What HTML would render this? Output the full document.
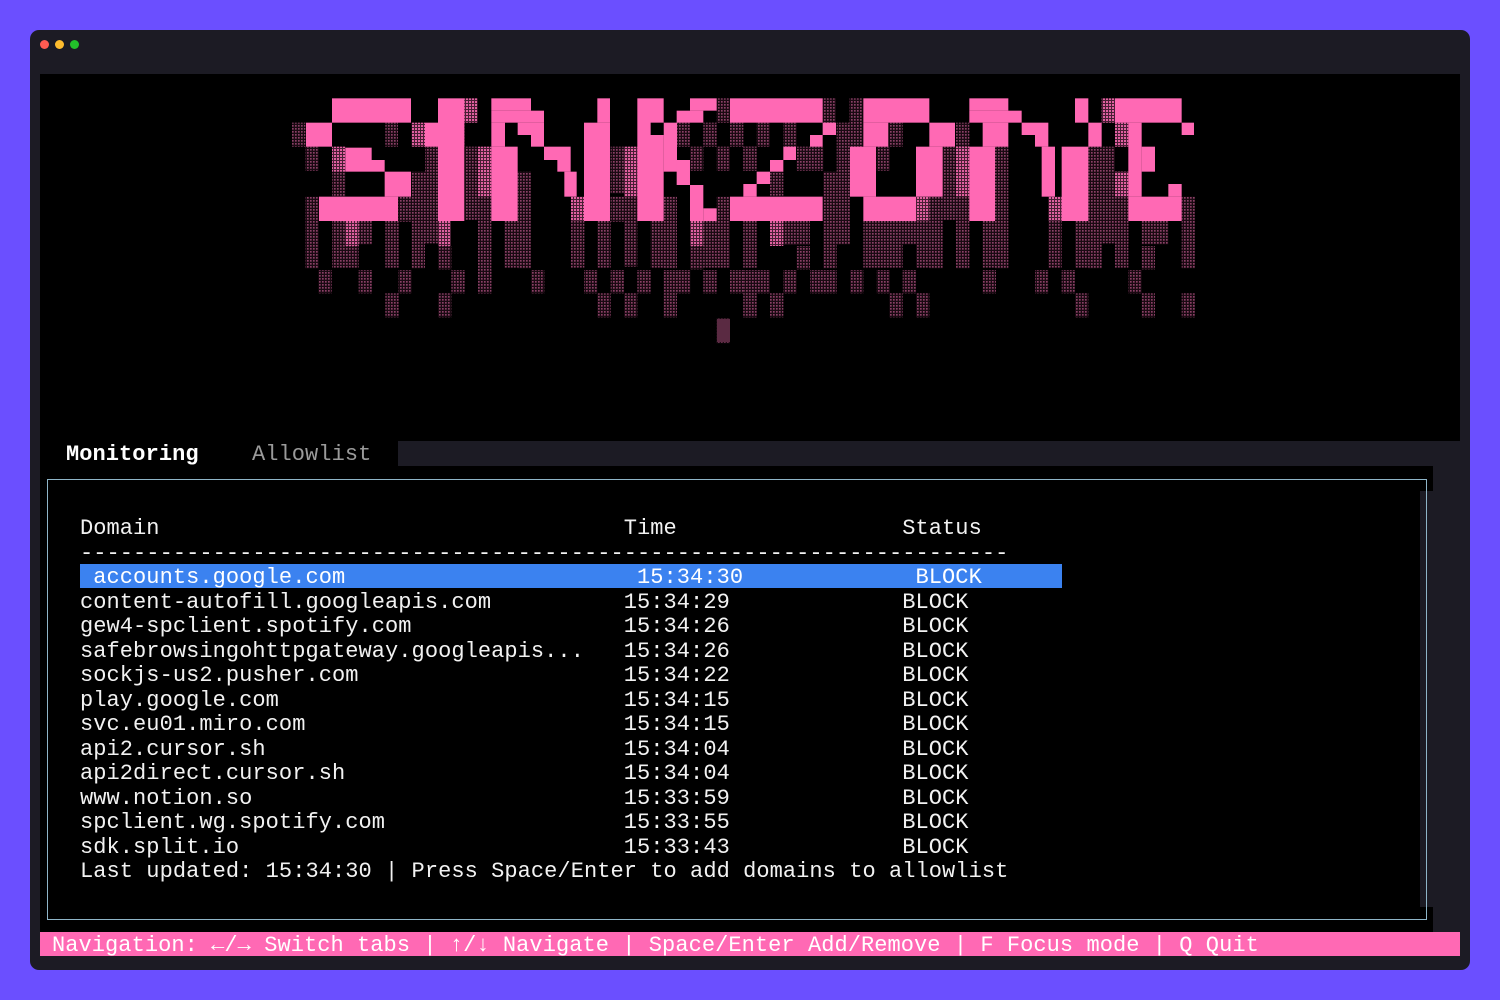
<!DOCTYPE html>
<html><head><meta charset="utf-8"><style>
*{margin:0;padding:0;box-sizing:border-box}
body{width:1500px;height:1000px;background:#6b4fff;position:relative;overflow:hidden;font-family:"Liberation Mono","DejaVu Sans Mono",monospace;}
.abs{position:absolute}
.win{left:30px;top:30px;width:1440px;height:940px;background:#1c1b24;border-radius:9px}
.dot{width:9px;height:9px;border-radius:50%;top:40px}
.t{position:absolute;white-space:pre;font-size:22px;line-height:24.5px;height:24.5px;color:#f2f2f2;letter-spacing:0.06px;padding-top:2px}
</style></head><body>
<div class="abs win"></div>
<div class="abs dot" style="left:40px;background:#ff5b52"></div>
<div class="abs dot" style="left:55px;background:#febc2e"></div>
<div class="abs dot" style="left:70px;background:#22c02a"></div>
<div class="abs" style="left:40px;top:74px;width:1420px;height:367px;background:#000"></div>
<div class="abs" style="left:40px;top:441px;width:358px;height:25px;background:#000"></div>
<div class="abs" style="left:40px;top:466px;width:1393px;height:466px;background:#000"></div>
<div class="abs" style="left:1420px;top:491px;width:13px;height:416px;background:#1c1b24"></div>
<div class="abs" style="left:47px;top:479px;width:1380px;height:441px;border:1px solid #8fb5c8"></div>
<svg class="abs" style="left:0;top:0" width="1500" height="440">
<defs>
<pattern id="pd" patternUnits="userSpaceOnUse" width="9" height="9"><rect width="9" height="9" fill="#1a0a12"/><rect width="5" height="5" fill="#8a4066"/></pattern>
<pattern id="pl" patternUnits="userSpaceOnUse" width="9" height="9"><rect width="9" height="9" fill="#4a1f35"/><rect width="6" height="6" fill="#e060a0"/></pattern>
</defs>
<g transform="translate(280,80) scale(0.33333)">
<g fill="url(#pd)">
<rect x="36" y="128" width="40" height="72"/><rect x="76" y="200" width="40" height="72"/><rect x="156" y="275" width="40" height="75"/><rect x="316" y="128" width="38" height="72"/><rect x="514" y="128" width="40" height="72"/><rect x="555" y="200" width="40" height="220"/><rect x="435" y="200" width="40" height="290"/><rect x="395" y="275" width="40" height="290"/><rect x="594" y="350" width="40" height="290"/><rect x="713" y="275" width="40" height="290"/><rect x="673" y="423" width="40" height="140"/><rect x="76" y="350" width="40" height="215"/><rect x="156" y="423" width="80" height="140"/><rect x="236" y="423" width="40" height="70"/><rect x="316" y="423" width="40" height="140"/><rect x="355" y="350" width="40" height="75"/><rect x="474" y="498" width="40" height="70"/><rect x="115" y="570" width="40" height="70"/><rect x="236" y="570" width="40" height="70"/><rect x="355" y="570" width="40" height="70"/><rect x="514" y="570" width="40" height="70"/><rect x="594" y="570" width="40" height="70"/><rect x="753" y="570" width="40" height="70"/><rect x="316" y="640" width="40" height="72"/><rect x="474" y="640" width="40" height="72"/>
<rect x="873" y="423" width="40" height="140"/><rect x="952" y="423" width="40" height="140"/><rect x="992" y="200" width="40" height="140"/><rect x="1032" y="350" width="40" height="210"/><rect x="992" y="350" width="40" height="75"/><rect x="912" y="570" width="40" height="70"/><rect x="992" y="570" width="40" height="70"/><rect x="1072" y="570" width="40" height="70"/><rect x="1151" y="350" width="40" height="215"/><rect x="1112" y="423" width="40" height="140"/><rect x="1151" y="570" width="80" height="70"/><rect x="1190" y="128" width="40" height="72"/><rect x="1230" y="200" width="40" height="72"/><rect x="1270" y="128" width="40" height="72"/><rect x="1310" y="55" width="40" height="73"/><rect x="1310" y="200" width="40" height="72"/><rect x="1350" y="128" width="40" height="72"/><rect x="1390" y="200" width="40" height="72"/><rect x="1230" y="498" width="40" height="70"/><rect x="1270" y="423" width="80" height="140"/><rect x="1310" y="350" width="40" height="75"/><rect x="1390" y="423" width="40" height="140"/><rect x="1270" y="570" width="40" height="70"/><rect x="1350" y="570" width="40" height="70"/><rect x="952" y="640" width="40" height="72"/><rect x="1032" y="640" width="40" height="72"/><rect x="1151" y="640" width="40" height="72"/><rect x="1390" y="640" width="40" height="72"/><rect x="1310" y="715" width="40" height="75"/>
</g>
<g fill="url(#pl)">
<rect x="156" y="200" width="40" height="75"/><rect x="395" y="128" width="40" height="72"/><rect x="594" y="200" width="40" height="150"/><rect x="553" y="55" width="40" height="73"/><rect x="1032" y="200" width="40" height="150"/><rect x="196" y="423" width="40" height="75"/><rect x="474" y="423" width="39" height="75"/><rect x="873" y="350" width="39" height="73"/><rect x="1230" y="423" width="40" height="75"/>
</g>
<g fill="#ff69b4">
<rect x="156" y="55" width="237" height="73"/><rect x="78" y="128" width="78" height="72"/><rect x="196" y="203" width="79" height="37"/><rect x="196" y="240" width="118" height="35"/><rect x="314" y="275" width="79" height="75"/><rect x="117" y="350" width="237" height="73"/>
<rect x="474" y="55" width="79" height="368"/><rect x="435" y="128" width="39" height="72"/>
<rect x="634" y="55" width="119" height="37"/><rect x="634" y="92" width="158" height="36"/><rect x="634" y="128" width="41" height="72"/><rect x="713" y="128" width="79" height="37"/><rect x="753" y="165" width="39" height="35"/><rect x="634" y="200" width="79" height="223"/><rect x="792" y="200" width="80" height="40"/><rect x="832" y="240" width="40" height="35"/><rect x="853" y="275" width="37" height="75"/><rect x="912" y="128" width="78" height="295"/><rect x="952" y="55" width="38" height="73"/>
<rect x="1072" y="55" width="79" height="368"/><rect x="1151" y="128" width="40" height="147"/><rect x="1190" y="240" width="40" height="75"/><rect x="1230" y="315" width="40" height="108"/><rect x="1270" y="385" width="40" height="38"/><rect x="1190" y="92" width="80" height="36"/><rect x="1230" y="55" width="80" height="37"/>
</g>
<rect x="1112" y="128" width="39" height="37" fill="#000"/>
</g>
<g transform="translate(740,80) scale(0.33333)">
<g fill="url(#pd)">
<rect x="248" y="55" width="40" height="73"/><rect x="328" y="55" width="40" height="145"/><rect x="50" y="128" width="40" height="72"/><rect x="130" y="128" width="40" height="72"/><rect x="10" y="200" width="40" height="72"/><rect x="170" y="200" width="80" height="72"/><rect x="250" y="275" width="40" height="290"/><rect x="290" y="128" width="40" height="365"/><rect x="90" y="275" width="40" height="72"/><rect x="10" y="423" width="40" height="140"/><rect x="130" y="423" width="80" height="72"/><rect x="170" y="498" width="40" height="70"/><rect x="410" y="200" width="40" height="72"/><rect x="448" y="128" width="40" height="72"/><rect x="608" y="200" width="40" height="220"/><rect x="648" y="128" width="40" height="72"/><rect x="568" y="350" width="40" height="215"/><rect x="370" y="423" width="80" height="140"/><rect x="448" y="423" width="40" height="140"/><rect x="488" y="423" width="40" height="70"/><rect x="528" y="423" width="40" height="140"/><rect x="648" y="350" width="40" height="215"/><rect x="728" y="423" width="40" height="140"/><rect x="765" y="200" width="40" height="365"/><rect x="925" y="423" width="40" height="140"/><rect x="1005" y="423" width="40" height="140"/><rect x="1045" y="200" width="80" height="150"/><rect x="1045" y="350" width="40" height="215"/><rect x="1085" y="350" width="80" height="140"/><rect x="1125" y="423" width="40" height="140"/><rect x="1205" y="423" width="80" height="70"/><rect x="1205" y="498" width="40" height="70"/><rect x="1325" y="350" width="40" height="215"/><rect x="10" y="570" width="80" height="70"/><rect x="130" y="570" width="40" height="70"/><rect x="210" y="570" width="80" height="70"/><rect x="330" y="570" width="40" height="70"/><rect x="410" y="570" width="40" height="70"/><rect x="488" y="570" width="40" height="70"/><rect x="728" y="570" width="40" height="70"/><rect x="885" y="570" width="40" height="70"/><rect x="965" y="570" width="40" height="70"/><rect x="1165" y="570" width="40" height="70"/><rect x="10" y="640" width="40" height="72"/><rect x="90" y="640" width="40" height="72"/><rect x="448" y="640" width="40" height="72"/><rect x="528" y="640" width="40" height="72"/><rect x="1005" y="640" width="40" height="72"/><rect x="1205" y="640" width="40" height="72"/><rect x="1325" y="640" width="40" height="72"/>
</g>
<g fill="url(#pl)">
<rect x="90" y="423" width="40" height="75"/><rect x="528" y="350" width="40" height="73"/><rect x="648" y="200" width="40" height="150"/><rect x="925" y="350" width="40" height="73"/><rect x="1085" y="55" width="40" height="73"/><rect x="1125" y="128" width="40" height="72"/><rect x="1125" y="275" width="40" height="75"/>
</g>
<g fill="#ff69b4">
<rect x="-30" y="55" width="278" height="73"/><rect x="248" y="128" width="40" height="37"/><rect x="210" y="165" width="38" height="35"/><rect x="130" y="200" width="38" height="40"/><rect x="90" y="240" width="40" height="35"/><rect x="50" y="275" width="40" height="37"/><rect x="10" y="312" width="40" height="38"/><rect x="-30" y="350" width="278" height="73"/>
<rect x="370" y="55" width="198" height="73"/><rect x="370" y="128" width="75" height="72"/><rect x="330" y="200" width="78" height="150"/><rect x="370" y="350" width="158" height="73"/><rect x="568" y="128" width="77" height="72"/><rect x="528" y="200" width="80" height="150"/>
<rect x="688" y="55" width="117" height="37"/><rect x="688" y="92" width="157" height="36"/><rect x="728" y="128" width="77" height="72"/><rect x="688" y="200" width="77" height="223"/><rect x="845" y="128" width="80" height="37"/><rect x="885" y="165" width="40" height="35"/><rect x="905" y="200" width="40" height="150"/><rect x="965" y="200" width="80" height="223"/><rect x="1045" y="128" width="40" height="72"/><rect x="1005" y="55" width="40" height="73"/>
<rect x="1125" y="55" width="200" height="73"/><rect x="1165" y="128" width="40" height="222"/><rect x="1205" y="200" width="40" height="75"/><rect x="1165" y="350" width="160" height="73"/><rect x="1285" y="312" width="40" height="38"/><rect x="1325" y="128" width="37" height="37"/>
</g>
</g>
<rect x="717" y="319" width="13" height="23" fill="#5a2a42"/>
</svg>
<div class="t" style="left:66px;top:441px;font-weight:bold;color:#fff">Monitoring</div>
<div class="t" style="left:252px;top:441px;color:#9a9a9a">Allowlist</div>
<div class="t" style="left:80px;top:515px">Domain                                   Time                 Status</div>
<div class="t" style="left:80px;top:540px">----------------------------------------------------------------------</div>
<div class="abs" style="left:80px;top:564px;width:982px;height:24px;background:#3b82f0"></div>
<div class="t" style="left:80px;top:564px;color:#fff"> accounts.google.com                      15:34:30             BLOCK</div>
<div class="t" style="left:80px;top:588.5px">content-autofill.googleapis.com          15:34:29             BLOCK</div>
<div class="t" style="left:80px;top:613px">gew4-spclient.spotify.com                15:34:26             BLOCK</div>
<div class="t" style="left:80px;top:637.5px">safebrowsingohttpgateway.googleapis...   15:34:26             BLOCK</div>
<div class="t" style="left:80px;top:662px">sockjs-us2.pusher.com                    15:34:22             BLOCK</div>
<div class="t" style="left:80px;top:686.5px">play.google.com                          15:34:15             BLOCK</div>
<div class="t" style="left:80px;top:711px">svc.eu01.miro.com                        15:34:15             BLOCK</div>
<div class="t" style="left:80px;top:735.5px">api2.cursor.sh                           15:34:04             BLOCK</div>
<div class="t" style="left:80px;top:760px">api2direct.cursor.sh                     15:34:04             BLOCK</div>
<div class="t" style="left:80px;top:784.5px">www.notion.so                            15:33:59             BLOCK</div>
<div class="t" style="left:80px;top:809px">spclient.wg.spotify.com                  15:33:55             BLOCK</div>
<div class="t" style="left:80px;top:833.5px">sdk.split.io                             15:33:43             BLOCK</div>
<div class="t" style="left:80px;top:858px">Last updated: 15:34:30 | Press Space/Enter to add domains to allowlist</div>
<div class="abs" style="left:40px;top:932px;width:1420px;height:24px;background:#ff69b4"></div>
<div class="t" style="left:52px;top:932px;color:#fff">Navigation: ←/→ Switch tabs | ↑/↓ Navigate | Space/Enter Add/Remove | F Focus mode | Q Quit</div>
</body></html>
